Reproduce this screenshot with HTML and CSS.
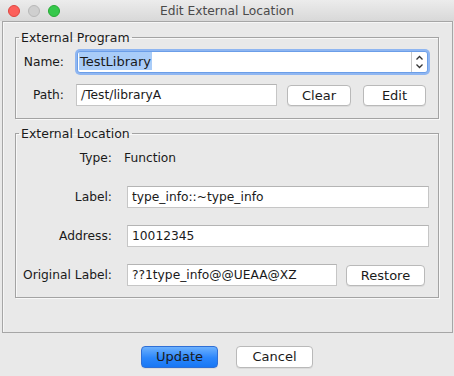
FILE: index.html
```html
<!doctype html>
<html>
  <head>
    <title>Edit External Location</title>
    <link rel="stylesheet" href="styles.css">
  </head>
  <body>
    <div class="window">

      <!--Title bar-->
      <div class="titlebar">
        <div class="lights">
          <span class="light red"></span>
          <span class="light grey"></span>
          <span class="light green"></span>
        </div>
        <div class="title">Edit External Location</div>
      </div>

      <!--Main panel-->
      <div class="panel">

        <fieldset class="group program">
          <legend>External Program</legend>
          <div class="row">
            <label>Name:</label>
            <div class="combo">
              <div class="combo-text"><span class="sel">TestLibrary</span></div>
              <div class="combo-arrows">
                <svg width="9" height="16" viewBox="0 0 9 16">
                  <path d="M1.5 5.5 L4.5 2.5 L7.5 5.5 M1.5 10.5 L4.5 13.5 L7.5 10.5" fill="none" stroke="#333" stroke-width="1.3"/>
                </svg>
              </div>
            </div>
          </div>
          <div class="row">
            <label>Path:</label>
            <div class="field path">/Test/libraryA</div>
            <div class="btn clear">Clear</div>
            <div class="btn edit">Edit</div>
          </div>
        </fieldset>

        <fieldset class="group location">
          <legend>External Location</legend>
          <div class="row">
            <label>Type:</label>
            <div class="value">Function</div>
          </div>
          <div class="row">
            <label>Label:</label>
            <div class="field grow">type_info::~type_info</div>
          </div>
          <div class="row">
            <label>Address:</label>
            <div class="field grow">10012345</div>
          </div>
          <div class="row">
            <label>Original Label:</label>
            <div class="field orig">??1type_info@@UEAA@XZ</div>
            <div class="btn restore">Restore</div>
          </div>
        </fieldset>

      </div>

      <!--Buttons-->
      <div class="footer">
        <div class="btn default">Update</div>
        <div class="btn">Cancel</div>
      </div>

    </div>
  </body>
</html>
```

FILE: styles.css
```css
body {
  margin:0;
  font-family: 'DejaVu Sans', sans-serif;
  font-size:12.25px;
  color:#1a1a1a;
  background:#e9e9e9;
}

.window {
  width:454px;
  height:376px;
  background:#e9e9e9;
}

/* Title bar */

.titlebar {
  position:relative;
  height:21px;
  background: linear-gradient(180deg, #ececec 0%, #d8d8d8 100%);
  display:flex;
  align-items:center;
  justify-content:center;
}
.lights {
  position:absolute;
  left:8px;
  top:5px;
  display:flex;
  gap:8px;
}
.light {
  width:12px;
  height:12px;
  border-radius:50%;
  box-sizing:border-box;
}
.red { background:#fc605b; border:1px solid #de4640; }
.grey { background:#cfcfcf; border:1px solid #b8b8b8; }
.green { background:#35c84b; border:1px solid #26a934; }
.title {
  font-size:12.25px;
  color:#4a4a4a;
  margin-top:1px;
}

/* Panel */

.panel {
  margin-left:2px;
  width:451px;
  height:312px;
  box-sizing:border-box;
  border:1px solid #a6a6a6;
  box-shadow: inset 1px 1px 0 #f6f6f6;
  padding:8px 0 0 12px;
}

.group {
  margin:0;
  width:424px;
  box-sizing:border-box;
  border:1px solid #a3a3a3;
  box-shadow: 1px 1px 0 #f8f8f8, inset 1px 1px 0 #f8f8f8;
  padding:6px 9px 12px 0;
  min-width:0;
}
.group legend {
  padding:0 2px;
  margin-left:3px;
  line-height:15px;
  font-size:12.5px;
}
.group.location {
  margin-top:7px;
  padding-top:6px;
  padding-bottom:11px;
}

.row {
  display:flex;
  align-items:center;
  height:22px;
}
.row + .row {
  margin-top:11px;
}
.location .row + .row {
  margin-top:17px;
}
.row label {
  width:48px;
  margin-right:12px;
  text-align:right;
  flex-shrink:0;
}
.location .row label {
  width:96px;
  margin-right:15px;
}

.field {
  height:22px;
  box-sizing:border-box;
  background:#fff;
  border:1px solid #c6c6c6;
  border-top-color:#b4b4b4;
  padding:0 4px;
  line-height:20px;
  white-space:nowrap;
  overflow:hidden;
}
.field.path { width:201px; }
.field.grow { flex:1; }
.field.orig { width:210px; }
.value { margin-left:-3px; }

/* Combo box with focus ring */

.combo {
  flex:1;
  height:22px;
  box-sizing:border-box;
  display:flex;
  background:#fff;
  border:1px solid #6b9ee8;
  border-radius:3px;
  box-shadow: 0 0 0 2px #8fb6f1;
  margin-left:1px;
  margin-right:1px;
}
.combo-text {
  flex:1;
  padding-left:1px;
  line-height:20px;
  font-size:13px;
}
.sel {
  background:#a9ccf8;
  padding:2px 1px 1px 1px;
}
.combo-arrows {
  width:15px;
  border-left:1px solid #c8c8c8;
  display:flex;
  align-items:center;
  justify-content:center;
}

/* Buttons */

.btn {
  height:21px;
  box-sizing:border-box;
  background:#fff;
  border:1px solid #b9b9b9;
  border-radius:4px;
  box-shadow: 0 1px 0 rgba(0,0,0,0.06);
  text-align:center;
  line-height:19px;
  font-size:13px;
}
.btn.clear { width:64px; margin-left:10px; }
.btn.edit { width:63px; margin-left:12px; }
.btn.restore { width:79px; margin-left:9px; }

.footer {
  display:flex;
  justify-content:center;
  gap:18px;
  padding-top:13px;
}
.footer .btn {
  width:77px;
  height:22px;
  line-height:20px;
}
.btn.default {
  background: linear-gradient(180deg, #6db1fd 0%, #2b86fb 55%, #1877f4 100%);
  border-color:#2f6fd6;
}
```
